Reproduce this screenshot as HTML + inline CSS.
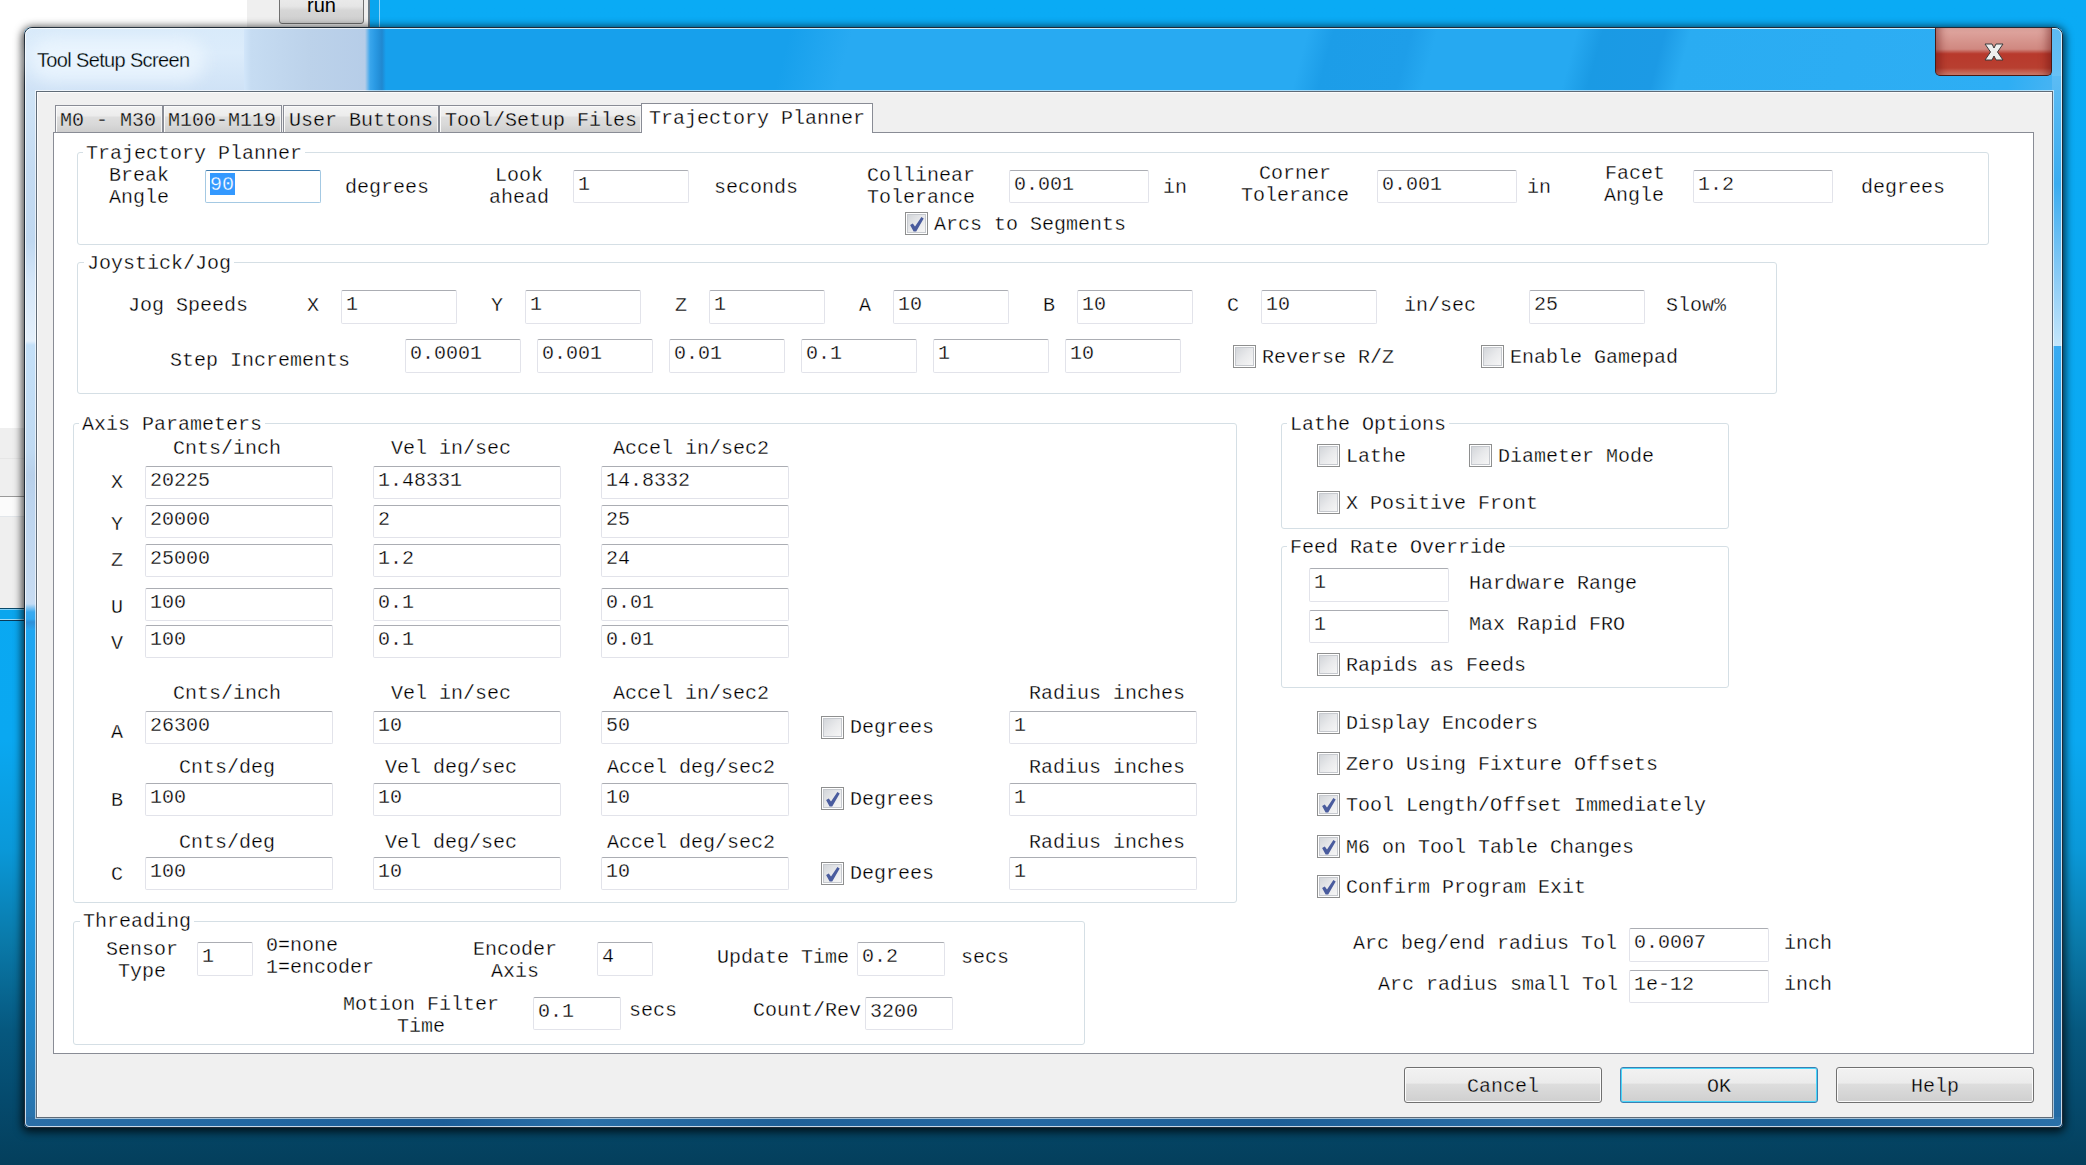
<!DOCTYPE html><html><head><meta charset="utf-8"><style>
html,body{margin:0;padding:0}
body{width:2086px;height:1165px;overflow:hidden;position:relative;
 background:linear-gradient(180deg,#0aabf5 0px,#0aa8f1 740px,#0a98d8 850px,#0a7aaa 940px,#06587f 1030px,#054a6d 1100px,#043f5c 1165px);
 font-family:"Liberation Mono",monospace}
.abs{position:absolute}
.t{position:absolute;font:20px/22px "Liberation Mono",monospace;white-space:pre;color:#000;-webkit-text-stroke:0.3px #fff}
.gt{background:#fff}
.inp{position:absolute;box-sizing:border-box;background:#fff;border:1px solid #e2e3ea;border-top-color:#abadb3;border-radius:2px}
.inp.foc{border-color:#a4c9e3;border-top-color:#3d7bad}
.it{position:absolute;left:4px;top:3px;font:20px/22px "Liberation Mono",monospace;white-space:pre;color:#000;-webkit-text-stroke:0.3px #fff}
.tt{-webkit-text-stroke:0.3px #e4e4e4}
.sel{display:inline-block;height:21px;padding-top:1px;margin-top:-1px;padding-right:1px;vertical-align:top;background:#3399ff;color:#fff;-webkit-text-stroke:0.3px #3399ff}
.cb{position:absolute;width:23px;height:23px;box-sizing:border-box;border:1px solid #8e8f8f;background:#fff}
.cbi{position:absolute;left:1px;top:1px;width:19px;height:19px;box-sizing:border-box;border:1px solid #c6c9ce;
 background:linear-gradient(135deg,#d3d6da 0%,#e8e9eb 50%,#f6f6f6 100%)}
.grp{position:absolute;border:1px solid #d5dfe5;border-radius:3px}
.tab{position:absolute;box-sizing:border-box;border:1px solid #898c95;border-bottom:none;
 background:linear-gradient(180deg,#f3f3f3 0px,#ececec 10px,#dedede 11px,#d9d9d9 18px,#cdcdcd 26px);box-shadow:inset 1px 1px 0 #fbfbfb,inset -1px 0 0 #f4f4f4}
.tab.s{background:#fff;box-shadow:none}
.btn{position:absolute;box-sizing:border-box;border:1px solid #707070;border-radius:3px;
 background:linear-gradient(180deg,#f2f2f2 0%,#ebebeb 44%,#dddddd 48%,#cfcfcf 100%);
 box-shadow:inset 0 0 0 1px #fbfbfb}
</style></head><body>
<div class="abs" style="left:0;top:0;width:247px;height:60px;background:#fff"></div>
<div class="abs" style="left:247px;top:0;width:121px;height:40px;background:#efefef"></div>
<div class="abs" style="left:368px;top:0;width:2px;height:28px;background:#6a7a86"></div>
<div class="abs" style="left:370px;top:0;width:9px;height:28px;background:#0aa5ee"></div>
<div class="abs" style="left:379px;top:0;width:1px;height:28px;background:#8fd3f8"></div>
<div class="abs" style="left:279px;top:-6px;width:85px;height:30px;box-sizing:border-box;border:1px solid #707070;border-radius:3px;background:linear-gradient(180deg,#ececec 0%,#e6e6e6 40%,#d6d6d6 55%,#cfcfcf 100%)"></div>
<div class="abs" style="left:279px;top:-7px;width:85px;text-align:center;font:20px/24px 'Liberation Sans',sans-serif;color:#000">run</div>
<div class="abs" style="left:0;top:28px;width:40px;height:400px;background:#fff"></div>
<div class="abs" style="left:0;top:428px;width:25px;height:68px;background:#efefef"></div>
<div class="abs" style="left:0;top:458px;width:25px;height:1px;background:#e6e6e6"></div>
<div class="abs" style="left:0;top:496px;width:25px;height:1px;background:#9a9a9a"></div>
<div class="abs" style="left:0;top:497px;width:25px;height:20px;background:#fbfbfb"></div>
<div class="abs" style="left:0;top:516px;width:25px;height:1px;background:#e2e6ea"></div>
<div class="abs" style="left:0;top:517px;width:25px;height:91px;background:#efefef"></div>
<div class="abs" style="left:0;top:608px;width:25px;height:13px;background:linear-gradient(180deg,#0a4a6a 0px,#0a4a6a 1px,#80d0f8 1px,#80d0f8 2px,#0aa6ee 2px,#0aa6ee 11px,#a0dcf8 11px,#a0dcf8 12px,#0a3a58 12px)"></div>
<div class="abs" style="left:24px;top:27px;width:2039px;height:1101px;border-radius:8px 8px 5px 5px;box-shadow:0 2px 9px 2px rgba(0,0,0,0.75)"></div>
<div class="abs" style="left:0;top:0;width:2086px;height:1165px;clip-path:inset(27px 23px 37px 24px round 8px 8px 5px 5px)">
<div class="abs" style="left:24px;top:27px;width:2039px;height:1101px;background:linear-gradient(180deg,#1ea3ee 0px,#1ea0ea 560px,#2090d8 800px,#2a78b4 1000px,#2b6fa8 1101px)"></div>
<div class="abs" style="left:25px;top:28px;width:2037px;height:63px;background:linear-gradient(105deg,#17a0ec 0px,#17a0ec 740px,#28aaf2 800px,#28aaf2 1240px,#1c9de8 1265px,#1e9ee9 1340px,#26a9f1 1365px,#26a9f1 1500px,#1a9ae4 1525px,#1c9ae5 1585px,#2aacf2 1610px,#2eaef4 1930px,#5ab8f2 2010px,#6cc2f6 2037px)"></div>
<div class="abs" style="left:2052px;top:28px;width:11px;height:63px;background:linear-gradient(180deg,#5cbaf2 0%,#6cc4f6 100%)"></div>
<div class="abs" style="left:24px;top:27px;width:228px;height:64px;background:linear-gradient(180deg,#d8eafa 0%,#dcecfb 40%,#cfe2f6 100%)"></div>
<div class="abs" style="left:244px;top:28px;width:126px;height:63px;background:linear-gradient(90deg,#d2e6fa 0px,#c6dcf2 7px,#bcd2ea 66px,#b6cde8 121px,#3aa6ec 126px)"></div>
<div class="abs" style="left:370px;top:28px;width:16px;height:63px;background:linear-gradient(90deg,#3aa6ec 0px,#2a9ae4 5px,#2088d0 12px,#16a0ee 16px)"></div>
<div class="abs" style="left:25px;top:91px;width:11px;height:528px;background:linear-gradient(180deg,#d0e4f6 0px,#c4dbf2 79px,#c0d8f0 150px,#d4e6f8 189px,#e4f0fb 250px,#c4e0f8 254px,#c0daf2 359px,#b8d0ea 384px,#bcd4ee 409px,#c8dcf2 516px)"></div>
<div class="abs" style="left:25px;top:600px;width:11px;height:30px;background:linear-gradient(180deg,#c8dcf2 0px,#c4dcf4 4px,#3aaaf0 12px,#30a8f0 19px,#3090d8 22px,#28a6f0 30px)"></div>
<div class="abs" style="left:25px;top:630px;width:11px;height:487px;background:linear-gradient(180deg,#1ea6f2 0%,#1e9fe8 250px,#2186c8 400px,#2a70a8 498px)"></div>
<div class="abs" style="left:2052px;top:76px;width:10px;height:270px;background:linear-gradient(180deg,#5cbcf4 0%,#3aacf0 40%,#8cccf6 75%,#c4e6fb 100%)"></div>
<div class="abs" style="left:2052px;top:346px;width:10px;height:771px;background:linear-gradient(180deg,#38abf2 0px,#2a9ee8 154px,#2288d0 454px,#1e74b4 654px,#236aa4 771px)"></div>
<div class="abs" style="left:24px;top:1117px;width:2039px;height:11px;background:linear-gradient(90deg,#2a6ea6 0px,#2268a2 200px,#1c5e98 420px,#2a70a8 560px,#1e6098 760px,#2468a2 1000px,#1c5e96 1250px,#2a6ea6 1500px,#1e6298 1750px,#2a70a8 2039px)"></div>
</div>
<div class="abs" style="left:24px;top:27px;width:2039px;height:1101px;box-sizing:border-box;border:1px solid #1e2a36;border-radius:8px 8px 5px 5px"></div>
<div class="abs" style="left:25px;top:28px;width:2037px;height:1099px;box-sizing:border-box;border:1px solid rgba(255,255,255,0.75);border-radius:7px 7px 4px 4px"></div>
<div class="abs" style="left:30px;top:38px;width:175px;height:44px;border-radius:22px;background:rgba(240,248,255,0.7);filter:blur(8px)"></div>
<div class="abs" style="left:37px;top:48px;font:20px/24px 'Liberation Sans',sans-serif;letter-spacing:-0.65px;color:#000;white-space:pre;-webkit-text-stroke:0.3px #dcecfa">Tool Setup Screen</div>
<div class="abs" style="left:1935px;top:28px;width:117px;height:48px;box-sizing:border-box;border:1px solid #4a1a14;border-top:none;border-radius:0 0 5px 5px;background:linear-gradient(180deg,#e0a8a2 0%,#d08880 45%,#b8392c 55%,#b83f30 85%,#d08070 100%);box-shadow:inset 10px 0 8px -6px rgba(90,10,10,0.45),inset -10px 0 8px -6px rgba(90,10,10,0.45)"></div>
<svg class="abs" style="left:1984px;top:43px" width="20" height="18"><path d="M1 1 L8 1 L10 5 L12 1 L19 1 L13.5 9 L19 17 L12 17 L10 13 L8 17 L1 17 L6.5 9 Z" fill="#eeeeee" stroke="#3a3a3a" stroke-width="1" stroke-linejoin="round"/></svg>
<div class="abs" style="left:36px;top:91px;width:2017px;height:1027px;box-sizing:border-box;border:1px solid #5f6b77;background:#f0f0f0;box-shadow:0 0 0 1px rgba(255,255,255,0.6),inset 1px 1px 0 #fcfcfc"></div>
<div class="abs" style="left:53px;top:132px;width:1981px;height:922px;box-sizing:border-box;border:1px solid #898c95;background:#fff"></div>
<div class="tab" style="left:55px;top:105px;width:108px;height:27px"></div>
<div class="t tt" style="left:60px;top:110px;">M0 - M30</div>
<div class="tab" style="left:163px;top:105px;width:119px;height:27px"></div>
<div class="t tt" style="left:168px;top:110px;">M100-M119</div>
<div class="tab" style="left:283px;top:105px;width:156px;height:27px"></div>
<div class="t tt" style="left:289px;top:110px;">User Buttons</div>
<div class="tab" style="left:439px;top:105px;width:203px;height:27px"></div>
<div class="t tt" style="left:445px;top:110px;">Tool/Setup Files</div>
<div class="tab s" style="left:641px;top:103px;width:232px;height:30px"></div>
<div class="t" style="left:649px;top:108px;">Trajectory Planner</div>
<div class="grp" style="left:77px;top:152px;width:1910px;height:91px"></div>
<div class="t gt" style="left:83px;top:143px;padding:0 3px">Trajectory Planner</div>
<div class="t" style="left:109px;top:165px;">Break</div>
<div class="t" style="left:109px;top:187px;">Angle</div>
<div class="inp foc" style="left:205px;top:170px;width:116px;height:33px"><div class="it"><span class="sel">90</span></div></div>
<div class="t" style="left:345px;top:177px;">degrees</div>
<div class="t" style="left:495px;top:165px;">Look</div>
<div class="t" style="left:489px;top:187px;">ahead</div>
<div class="inp" style="left:573px;top:170px;width:116px;height:33px"><div class="it">1</div></div>
<div class="t" style="left:714px;top:177px;">seconds</div>
<div class="t" style="left:867px;top:165px;">Collinear</div>
<div class="t" style="left:867px;top:187px;">Tolerance</div>
<div class="inp" style="left:1009px;top:170px;width:140px;height:33px"><div class="it">0.001</div></div>
<div class="t" style="left:1163px;top:177px;">in</div>
<div class="t" style="left:1259px;top:163px;">Corner</div>
<div class="t" style="left:1241px;top:185px;">Tolerance</div>
<div class="inp" style="left:1377px;top:170px;width:140px;height:33px"><div class="it">0.001</div></div>
<div class="t" style="left:1527px;top:177px;">in</div>
<div class="t" style="left:1605px;top:163px;">Facet</div>
<div class="t" style="left:1604px;top:185px;">Angle</div>
<div class="inp" style="left:1693px;top:170px;width:140px;height:33px"><div class="it">1.2</div></div>
<div class="t" style="left:1861px;top:177px;">degrees</div>
<div class="cb" style="left:905px;top:212px"><div class="cbi"></div><svg width="23" height="23" style="position:absolute;left:0;top:0"><path d="M4.1 11.9 L6.8 10.5 L9.0 13.6 L15.4 4.0 L17.7 5.4 L10.2 18.4 L7.6 18.4 Z" fill="#4a5c9e"/></svg></div>
<div class="t" style="left:934px;top:214px;">Arcs to Segments</div>
<div class="grp" style="left:77px;top:262px;width:1698px;height:130px"></div>
<div class="t gt" style="left:84px;top:253px;padding:0 3px">Joystick/Jog</div>
<div class="t" style="left:128px;top:295px;">Jog Speeds</div>
<div class="t" style="left:307px;top:295px;">X</div>
<div class="inp" style="left:341px;top:290px;width:116px;height:34px"><div class="it">1</div></div>
<div class="t" style="left:491px;top:295px;">Y</div>
<div class="inp" style="left:525px;top:290px;width:116px;height:34px"><div class="it">1</div></div>
<div class="t" style="left:675px;top:295px;">Z</div>
<div class="inp" style="left:709px;top:290px;width:116px;height:34px"><div class="it">1</div></div>
<div class="t" style="left:859px;top:295px;">A</div>
<div class="inp" style="left:893px;top:290px;width:116px;height:34px"><div class="it">10</div></div>
<div class="t" style="left:1043px;top:295px;">B</div>
<div class="inp" style="left:1077px;top:290px;width:116px;height:34px"><div class="it">10</div></div>
<div class="t" style="left:1227px;top:295px;">C</div>
<div class="inp" style="left:1261px;top:290px;width:116px;height:34px"><div class="it">10</div></div>
<div class="t" style="left:1404px;top:295px;">in/sec</div>
<div class="inp" style="left:1529px;top:290px;width:116px;height:34px"><div class="it">25</div></div>
<div class="t" style="left:1666px;top:295px;">Slow%</div>
<div class="t" style="left:170px;top:350px;">Step Increments</div>
<div class="inp" style="left:405px;top:339px;width:116px;height:34px"><div class="it">0.0001</div></div>
<div class="inp" style="left:537px;top:339px;width:116px;height:34px"><div class="it">0.001</div></div>
<div class="inp" style="left:669px;top:339px;width:116px;height:34px"><div class="it">0.01</div></div>
<div class="inp" style="left:801px;top:339px;width:116px;height:34px"><div class="it">0.1</div></div>
<div class="inp" style="left:933px;top:339px;width:116px;height:34px"><div class="it">1</div></div>
<div class="inp" style="left:1065px;top:339px;width:116px;height:34px"><div class="it">10</div></div>
<div class="cb" style="left:1233px;top:345px"><div class="cbi"></div></div>
<div class="t" style="left:1262px;top:347px;">Reverse R/Z</div>
<div class="cb" style="left:1481px;top:345px"><div class="cbi"></div></div>
<div class="t" style="left:1510px;top:347px;">Enable Gamepad</div>
<div class="grp" style="left:73px;top:423px;width:1162px;height:478px"></div>
<div class="t gt" style="left:79px;top:414px;padding:0 3px">Axis Parameters</div>
<div class="t" style="left:173px;top:438px;">Cnts/inch</div>
<div class="t" style="left:391px;top:438px;">Vel in/sec</div>
<div class="t" style="left:613px;top:438px;">Accel in/sec2</div>
<div class="t" style="left:111px;top:472px;">X</div>
<div class="inp" style="left:145px;top:466px;width:188px;height:33px"><div class="it">20225</div></div>
<div class="inp" style="left:373px;top:466px;width:188px;height:33px"><div class="it">1.48331</div></div>
<div class="inp" style="left:601px;top:466px;width:188px;height:33px"><div class="it">14.8332</div></div>
<div class="t" style="left:111px;top:514px;">Y</div>
<div class="inp" style="left:145px;top:505px;width:188px;height:33px"><div class="it">20000</div></div>
<div class="inp" style="left:373px;top:505px;width:188px;height:33px"><div class="it">2</div></div>
<div class="inp" style="left:601px;top:505px;width:188px;height:33px"><div class="it">25</div></div>
<div class="t" style="left:111px;top:550px;">Z</div>
<div class="inp" style="left:145px;top:544px;width:188px;height:33px"><div class="it">25000</div></div>
<div class="inp" style="left:373px;top:544px;width:188px;height:33px"><div class="it">1.2</div></div>
<div class="inp" style="left:601px;top:544px;width:188px;height:33px"><div class="it">24</div></div>
<div class="t" style="left:111px;top:597px;">U</div>
<div class="inp" style="left:145px;top:588px;width:188px;height:33px"><div class="it">100</div></div>
<div class="inp" style="left:373px;top:588px;width:188px;height:33px"><div class="it">0.1</div></div>
<div class="inp" style="left:601px;top:588px;width:188px;height:33px"><div class="it">0.01</div></div>
<div class="t" style="left:111px;top:633px;">V</div>
<div class="inp" style="left:145px;top:625px;width:188px;height:33px"><div class="it">100</div></div>
<div class="inp" style="left:373px;top:625px;width:188px;height:33px"><div class="it">0.1</div></div>
<div class="inp" style="left:601px;top:625px;width:188px;height:33px"><div class="it">0.01</div></div>
<div class="t" style="left:173px;top:683px;">Cnts/inch</div>
<div class="t" style="left:391px;top:683px;">Vel in/sec</div>
<div class="t" style="left:613px;top:683px;">Accel in/sec2</div>
<div class="t" style="left:1029px;top:683px;">Radius inches</div>
<div class="t" style="left:111px;top:722px;">A</div>
<div class="inp" style="left:145px;top:711px;width:188px;height:33px"><div class="it">26300</div></div>
<div class="inp" style="left:373px;top:711px;width:188px;height:33px"><div class="it">10</div></div>
<div class="inp" style="left:601px;top:711px;width:188px;height:33px"><div class="it">50</div></div>
<div class="cb" style="left:821px;top:716px"><div class="cbi"></div></div>
<div class="t" style="left:850px;top:717px;">Degrees</div>
<div class="inp" style="left:1009px;top:711px;width:188px;height:33px"><div class="it">1</div></div>
<div class="t" style="left:179px;top:757px;">Cnts/deg</div>
<div class="t" style="left:385px;top:757px;">Vel deg/sec</div>
<div class="t" style="left:607px;top:757px;">Accel deg/sec2</div>
<div class="t" style="left:1029px;top:757px;">Radius inches</div>
<div class="t" style="left:111px;top:790px;">B</div>
<div class="inp" style="left:145px;top:783px;width:188px;height:33px"><div class="it">100</div></div>
<div class="inp" style="left:373px;top:783px;width:188px;height:33px"><div class="it">10</div></div>
<div class="inp" style="left:601px;top:783px;width:188px;height:33px"><div class="it">10</div></div>
<div class="cb" style="left:821px;top:787px"><div class="cbi"></div><svg width="23" height="23" style="position:absolute;left:0;top:0"><path d="M4.1 11.9 L6.8 10.5 L9.0 13.6 L15.4 4.0 L17.7 5.4 L10.2 18.4 L7.6 18.4 Z" fill="#4a5c9e"/></svg></div>
<div class="t" style="left:850px;top:789px;">Degrees</div>
<div class="inp" style="left:1009px;top:783px;width:188px;height:33px"><div class="it">1</div></div>
<div class="t" style="left:179px;top:832px;">Cnts/deg</div>
<div class="t" style="left:385px;top:832px;">Vel deg/sec</div>
<div class="t" style="left:607px;top:832px;">Accel deg/sec2</div>
<div class="t" style="left:1029px;top:832px;">Radius inches</div>
<div class="t" style="left:111px;top:864px;">C</div>
<div class="inp" style="left:145px;top:857px;width:188px;height:33px"><div class="it">100</div></div>
<div class="inp" style="left:373px;top:857px;width:188px;height:33px"><div class="it">10</div></div>
<div class="inp" style="left:601px;top:857px;width:188px;height:33px"><div class="it">10</div></div>
<div class="cb" style="left:821px;top:862px"><div class="cbi"></div><svg width="23" height="23" style="position:absolute;left:0;top:0"><path d="M4.1 11.9 L6.8 10.5 L9.0 13.6 L15.4 4.0 L17.7 5.4 L10.2 18.4 L7.6 18.4 Z" fill="#4a5c9e"/></svg></div>
<div class="t" style="left:850px;top:863px;">Degrees</div>
<div class="inp" style="left:1009px;top:857px;width:188px;height:33px"><div class="it">1</div></div>
<div class="grp" style="left:73px;top:921px;width:1010px;height:122px"></div>
<div class="t gt" style="left:80px;top:911px;padding:0 3px">Threading</div>
<div class="t" style="left:106px;top:939px;">Sensor</div>
<div class="t" style="left:118px;top:961px;">Type</div>
<div class="inp" style="left:197px;top:942px;width:56px;height:34px"><div class="it">1</div></div>
<div class="t" style="left:266px;top:935px;">0=none</div>
<div class="t" style="left:266px;top:957px;">1=encoder</div>
<div class="t" style="left:473px;top:939px;">Encoder</div>
<div class="t" style="left:491px;top:961px;">Axis</div>
<div class="inp" style="left:597px;top:942px;width:56px;height:34px"><div class="it">4</div></div>
<div class="t" style="left:717px;top:947px;">Update Time</div>
<div class="inp" style="left:857px;top:942px;width:88px;height:34px"><div class="it">0.2</div></div>
<div class="t" style="left:961px;top:947px;">secs</div>
<div class="t" style="left:343px;top:994px;">Motion Filter</div>
<div class="t" style="left:397px;top:1016px;">Time</div>
<div class="inp" style="left:533px;top:997px;width:88px;height:33px"><div class="it">0.1</div></div>
<div class="t" style="left:629px;top:1000px;">secs</div>
<div class="t" style="left:753px;top:1000px;">Count/Rev</div>
<div class="inp" style="left:865px;top:997px;width:88px;height:33px"><div class="it">3200</div></div>
<div class="grp" style="left:1281px;top:423px;width:446px;height:104px"></div>
<div class="t gt" style="left:1287px;top:414px;padding:0 3px">Lathe Options</div>
<div class="cb" style="left:1317px;top:444px"><div class="cbi"></div></div>
<div class="t" style="left:1346px;top:446px;">Lathe</div>
<div class="cb" style="left:1469px;top:444px"><div class="cbi"></div></div>
<div class="t" style="left:1498px;top:446px;">Diameter Mode</div>
<div class="cb" style="left:1317px;top:491px"><div class="cbi"></div></div>
<div class="t" style="left:1346px;top:493px;">X Positive Front</div>
<div class="grp" style="left:1281px;top:546px;width:446px;height:140px"></div>
<div class="t gt" style="left:1287px;top:537px;padding:0 3px">Feed Rate Override</div>
<div class="inp" style="left:1309px;top:568px;width:140px;height:34px"><div class="it">1</div></div>
<div class="t" style="left:1469px;top:573px;">Hardware Range</div>
<div class="inp" style="left:1309px;top:610px;width:140px;height:33px"><div class="it">1</div></div>
<div class="t" style="left:1469px;top:614px;">Max Rapid FRO</div>
<div class="cb" style="left:1317px;top:653px"><div class="cbi"></div></div>
<div class="t" style="left:1346px;top:655px;">Rapids as Feeds</div>
<div class="cb" style="left:1317px;top:711px"><div class="cbi"></div></div>
<div class="t" style="left:1346px;top:713px;">Display Encoders</div>
<div class="cb" style="left:1317px;top:752px"><div class="cbi"></div></div>
<div class="t" style="left:1346px;top:754px;">Zero Using Fixture Offsets</div>
<div class="cb" style="left:1317px;top:793px"><div class="cbi"></div><svg width="23" height="23" style="position:absolute;left:0;top:0"><path d="M4.1 11.9 L6.8 10.5 L9.0 13.6 L15.4 4.0 L17.7 5.4 L10.2 18.4 L7.6 18.4 Z" fill="#4a5c9e"/></svg></div>
<div class="t" style="left:1346px;top:795px;">Tool Length/Offset Immediately</div>
<div class="cb" style="left:1317px;top:835px"><div class="cbi"></div><svg width="23" height="23" style="position:absolute;left:0;top:0"><path d="M4.1 11.9 L6.8 10.5 L9.0 13.6 L15.4 4.0 L17.7 5.4 L10.2 18.4 L7.6 18.4 Z" fill="#4a5c9e"/></svg></div>
<div class="t" style="left:1346px;top:837px;">M6 on Tool Table Changes</div>
<div class="cb" style="left:1317px;top:875px"><div class="cbi"></div><svg width="23" height="23" style="position:absolute;left:0;top:0"><path d="M4.1 11.9 L6.8 10.5 L9.0 13.6 L15.4 4.0 L17.7 5.4 L10.2 18.4 L7.6 18.4 Z" fill="#4a5c9e"/></svg></div>
<div class="t" style="left:1346px;top:877px;">Confirm Program Exit</div>
<div class="t" style="left:1353px;top:933px;">Arc beg/end radius Tol</div>
<div class="inp" style="left:1629px;top:928px;width:140px;height:34px"><div class="it">0.0007</div></div>
<div class="t" style="left:1784px;top:933px;">inch</div>
<div class="t" style="left:1378px;top:974px;">Arc radius small Tol</div>
<div class="inp" style="left:1629px;top:970px;width:140px;height:33px"><div class="it">1e-12</div></div>
<div class="t" style="left:1784px;top:974px;">inch</div>
<div class="btn" style="left:1404px;top:1067px;width:198px;height:36px;"></div>
<div class="t tt" style="left:1404px;top:1076px;width:198px;text-align:center">Cancel</div>
<div class="btn" style="left:1620px;top:1067px;width:198px;height:36px;border-color:#3c7fb1;box-shadow:inset 0 0 0 1px #48d7fb"></div>
<div class="t tt" style="left:1620px;top:1076px;width:198px;text-align:center">OK</div>
<div class="btn" style="left:1836px;top:1067px;width:198px;height:36px;"></div>
<div class="t tt" style="left:1836px;top:1076px;width:198px;text-align:center">Help</div>
</body></html>
